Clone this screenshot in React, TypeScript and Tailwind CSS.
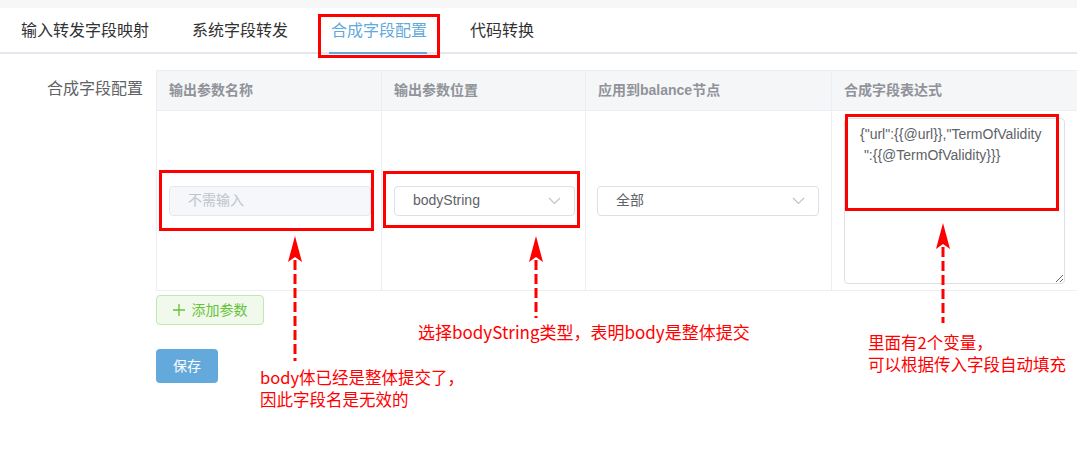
import { memo } from "react";

const tabs = ["输入转发字段映射", "系统字段转发", "合成字段配置", "代码转换"];
const activeTab = 2;

const columns = [
  { title: "输出参数名称", width: "w-[225px]" },
  { title: "输出参数位置", width: "w-[204px]" },
  { title: "应用到balance节点", width: "w-[246px]" },
  { title: "合成字段表达式", width: "w-[246px]" },
];

const Chevron = () => (
  <svg width="13" height="8" viewBox="0 0 13 8" fill="none" className="shrink-0">
    <path d="M1 1l5.5 5.5L12 1" stroke="#c0c4cc" strokeWidth="1.2" />
  </svg>
);

// dashed red arrow pointing up; tip at the top of the svg
const Arrow = ({ className, length }: { className: string; length: number }) => (
  <svg width="16" height={length} viewBox={`0 0 16 ${length}`} className={`absolute ${className}`}>
    <path d="M8 0L15 26L8 21L1 26Z" fill="#ff0000" />
    <line x1="8" y1="24" x2="8" y2={length} stroke="#ff0000" strokeWidth="3" strokeDasharray="10 4" />
  </svg>
);

const App = () => {
  return (
    <div className="relative w-[1077px] h-[455px] bg-white overflow-hidden font-['Liberation_Sans','Noto_Sans_CJK_SC',sans-serif]">
      {/* top strip */}
      <div className="h-[8px] bg-[#f7f7f8]" />

      {/* tabs */}
      <div className="flex h-[46px] gap-[43px] pl-[21px] border-b-2 border-[#e4e7ed]">
        {tabs.map((tab, i) => (
          <div
            key={tab}
            className={`relative flex items-center pt-[2px] text-[16px] ${
              i === activeTab ? "text-[#64a9dc]" : "text-[#303133]"
            }`}
          >
            {tab}
            {i === activeTab && (
              <span className="absolute left-[-2px] right-0 bottom-[-2px] h-[2px] bg-[#64a9dc]" />
            )}
          </div>
        ))}
      </div>

      {/* form */}
      <div className="flex mt-[16px]">
        <div className="w-[156px] shrink-0 pr-[13px] pt-[7px] text-right text-[16px] text-[#606266]">
          合成字段配置
        </div>

        <div className="flex flex-col">
          {/* table */}
          <div className="border-t border-l border-[#ebeef5]">
            <div className="flex bg-[#f5f6f7]">
              {columns.map((col) => (
                <div
                  key={col.title}
                  className={`${col.width} h-[40px] flex items-center px-[12px] border-r border-b border-[#ebeef5] text-[14px] font-bold text-[#909399]`}
                >
                  {col.title}
                </div>
              ))}
            </div>
            <div className="flex h-[180px]">
              <div className="w-[225px] flex items-center pl-[12px] pr-[10px] border-r border-b border-[#ebeef5]">
                <div className="w-full h-[30px] flex items-center px-[18px] rounded-[4px] border border-[#e4e7ed] bg-[#f5f7fa] text-[14px] text-[#c0c4cc]">
                  不需输入
                </div>
              </div>
              <div className="w-[204px] flex items-center pl-[12px] pr-[10px] border-r border-b border-[#ebeef5]">
                <div className="w-full h-[30px] flex items-center justify-between pl-[18px] pr-[13px] rounded-[4px] border border-[#dcdfe6] text-[14px] text-[#606266]">
                  bodyString
                  <Chevron />
                </div>
              </div>
              <div className="w-[246px] flex items-center pl-[11px] pr-[12px] border-r border-b border-[#ebeef5]">
                <div className="w-full h-[30px] flex items-center justify-between pl-[18px] pr-[13px] rounded-[4px] border border-[#dcdfe6] text-[14px] text-[#606266]">
                  全部
                  <Chevron />
                </div>
              </div>
              <div className="w-[246px] flex items-center px-[12px] border-r border-b border-[#ebeef5]">
                <textarea
                  readOnly
                  value={'{"url":{{@url}},"TermOfValidity\n ":{{@TermOfValidity}}}'}
                  className="w-full h-[166px] px-[15px] py-[5px] rounded-[4px] border border-[#dcdfe6] text-[14px] leading-[21px] text-[#606266] outline-none font-['Liberation_Sans','Noto_Sans_CJK_SC',sans-serif]"
                />
              </div>
            </div>
          </div>

          {/* buttons */}
          <div className="mt-[4px] flex">
            <button className="h-[30px] w-[108px] flex items-center justify-center gap-[7px] rounded-[4px] border border-[#c2e7b0] bg-[#f0f9eb] text-[14px] text-[#67c23a]">
              <svg width="12" height="12" viewBox="0 0 12 12">
                <path d="M6 0v12M0 6h12" stroke="#67c23a" strokeWidth="1.3" />
              </svg>
              添加参数
            </button>
          </div>
          <div className="mt-[24px] flex">
            <button className="h-[34px] w-[62px] rounded-[4px] bg-[#64a9dc] text-[14px] text-white">保存</button>
          </div>
        </div>
      </div>

      {/* annotations */}
      <div className="absolute left-[318px] top-[14px] w-[122px] h-[44px] border-[3px] border-[#ff0000]" />
      <div className="absolute left-[159px] top-[170px] w-[215px] h-[61px] border-[3px] border-[#ff0000]" />
      <div className="absolute left-[383px] top-[171px] w-[197px] h-[57px] border-[3px] border-[#ff0000]" />
      <div className="absolute left-[845px] top-[114px] w-[214px] h-[97px] border-[3px] border-[#ff0000]" />

      <Arrow className="left-[287px] top-[236px]" length={125} />
      <Arrow className="left-[528px] top-[236px]" length={82} />
      <Arrow className="left-[935px] top-[223px]" length={100} />

      <div className="absolute left-[418px] top-[320px] whitespace-nowrap text-[17px] leading-[24px] text-[#ff0000] font-['Noto_Sans_CJK_SC',sans-serif]">
        选择bodyString类型，表明body是整体提交
      </div>
      <div className="absolute left-[260px] top-[366px] whitespace-nowrap text-[16.5px] leading-[22px] text-[#ff0000] font-['Noto_Sans_CJK_SC',sans-serif]">
        <div>body体已经是整体提交了，</div>
        <div>因此字段名是无效的</div>
      </div>
      <div className="absolute left-[868px] top-[331px] whitespace-nowrap text-[16.5px] leading-[22px] text-[#ff0000] font-['Noto_Sans_CJK_SC',sans-serif]">
        <div>里面有2个变量，</div>
        <div>可以根据传入字段自动填充</div>
      </div>
    </div>
  );
};

export default memo(App);
